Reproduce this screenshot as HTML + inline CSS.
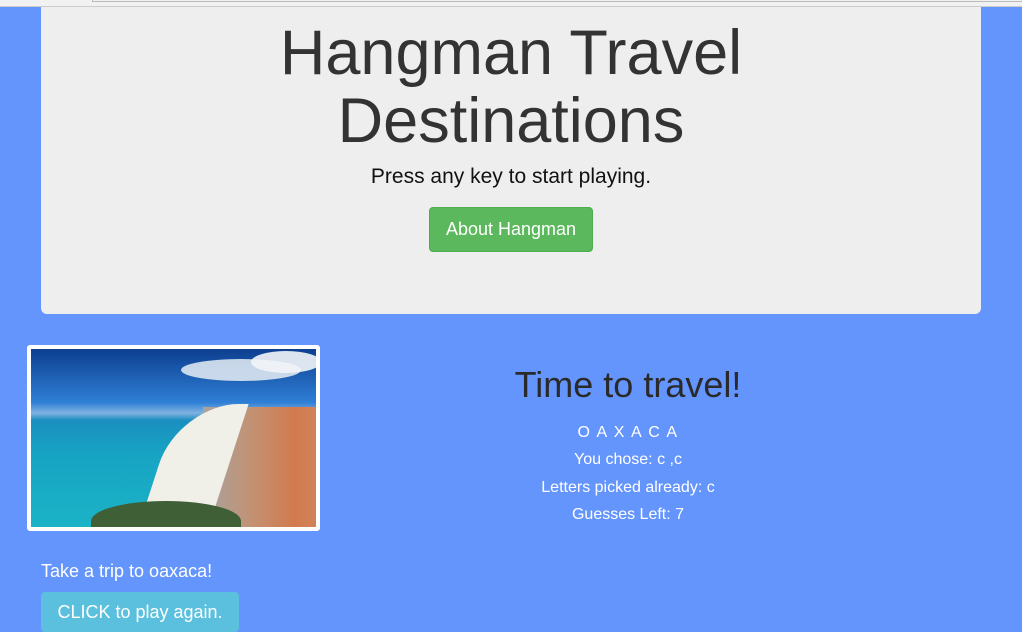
<!DOCTYPE html>
<html><head><style>
body{margin:0;width:1022px;height:619px;overflow:hidden;background:#6495fd;font-family:"Liberation Sans",sans-serif;position:relative}
.top{position:absolute;left:0;top:0;width:1022px;height:6px;background:#f1f1f1;border-bottom:1px solid #ccc}
.top i{position:absolute;left:92px;top:0;right:0;height:1px;border-bottom:1px solid #bbb;border-left:1px solid #bbb}
.jumbo{position:absolute;left:41px;top:7px;width:940px;height:307px;background:#eee;border-radius:0 0 6px 6px;text-align:center;color:#333}
h1{margin:0;position:absolute;top:12px;width:100%;font-size:63px;font-weight:normal;line-height:68px}
.p{position:absolute;top:158px;width:100%;font-size:21px;color:#111}
.btn{position:absolute;left:388px;top:200px;width:162px;height:43px;background:#5cb85c;border:1px solid #4cae4c;border-radius:4px;color:#fff;font-size:18px;line-height:43px}
.frame{position:absolute;left:27px;top:345px;width:285px;height:178px;border:4px solid #fff;border-radius:3px;overflow:hidden;
background:linear-gradient(180deg,#0d3f8f 0%,#2f7fd6 30%,#7fb2e0 36%,#1b8fc0 40%,#17a4c4 60%,#1bb3c6 100%)}
.beach{position:absolute;left:120px;top:55px;width:70px;height:170px;background:#f0efe8;transform:skewX(-18deg);border-radius:60px 0 0 0}
.city{position:absolute;left:172px;top:58px;width:130px;height:130px;background:linear-gradient(90deg,#a8a4a0,#c49070 40%,#d27a4e 70%,#cf8a60)}
.tree{position:absolute;left:60px;top:152px;width:150px;height:40px;background:#3f5f36;border-radius:50% 50% 0 0}
.cloud{position:absolute;left:150px;top:10px;width:120px;height:22px;background:#e8eef5;border-radius:50%;opacity:.85}
.cloud2{position:absolute;left:220px;top:2px;width:70px;height:22px;background:#f2f5f8;border-radius:50%;opacity:.9}
.right{position:absolute;left:430px;width:396px;text-align:center;color:#fff}
.t{position:absolute;left:41px;top:561px;color:#fff;font-size:18px}
.b2{position:absolute;left:41px;top:592px;width:198px;height:40px;background:#5bc0de;border-radius:4px;color:#fff;font-size:18px;line-height:40px;text-align:center}
</style></head><body>
<div class="top"><i></i></div>
<div class="jumbo"><h1>Hangman Travel<br>Destinations</h1><div class="p">Press any key to start playing.</div><div class="btn">About Hangman</div></div>
<div class="frame"><div class="cloud"></div><div class="cloud2"></div><div class="city"></div><div class="beach"></div><div class="tree"></div></div>
<div class="right" style="top:364px;font-size:36px;color:#2a2a2a">Time to travel!</div>
<div class="right" style="top:424px;font-size:16px;letter-spacing:1.5px">O A X A C A</div>
<div class="right" style="top:451px;font-size:16px">You chose: c ,c</div>
<div class="right" style="top:479px;font-size:16px">Letters picked already: c</div>
<div class="right" style="top:506px;font-size:16px">Guesses Left: 7</div>
<div class="t">Take a trip to oaxaca!</div>
<div class="b2">CLICK to play again.</div>
</body></html>
